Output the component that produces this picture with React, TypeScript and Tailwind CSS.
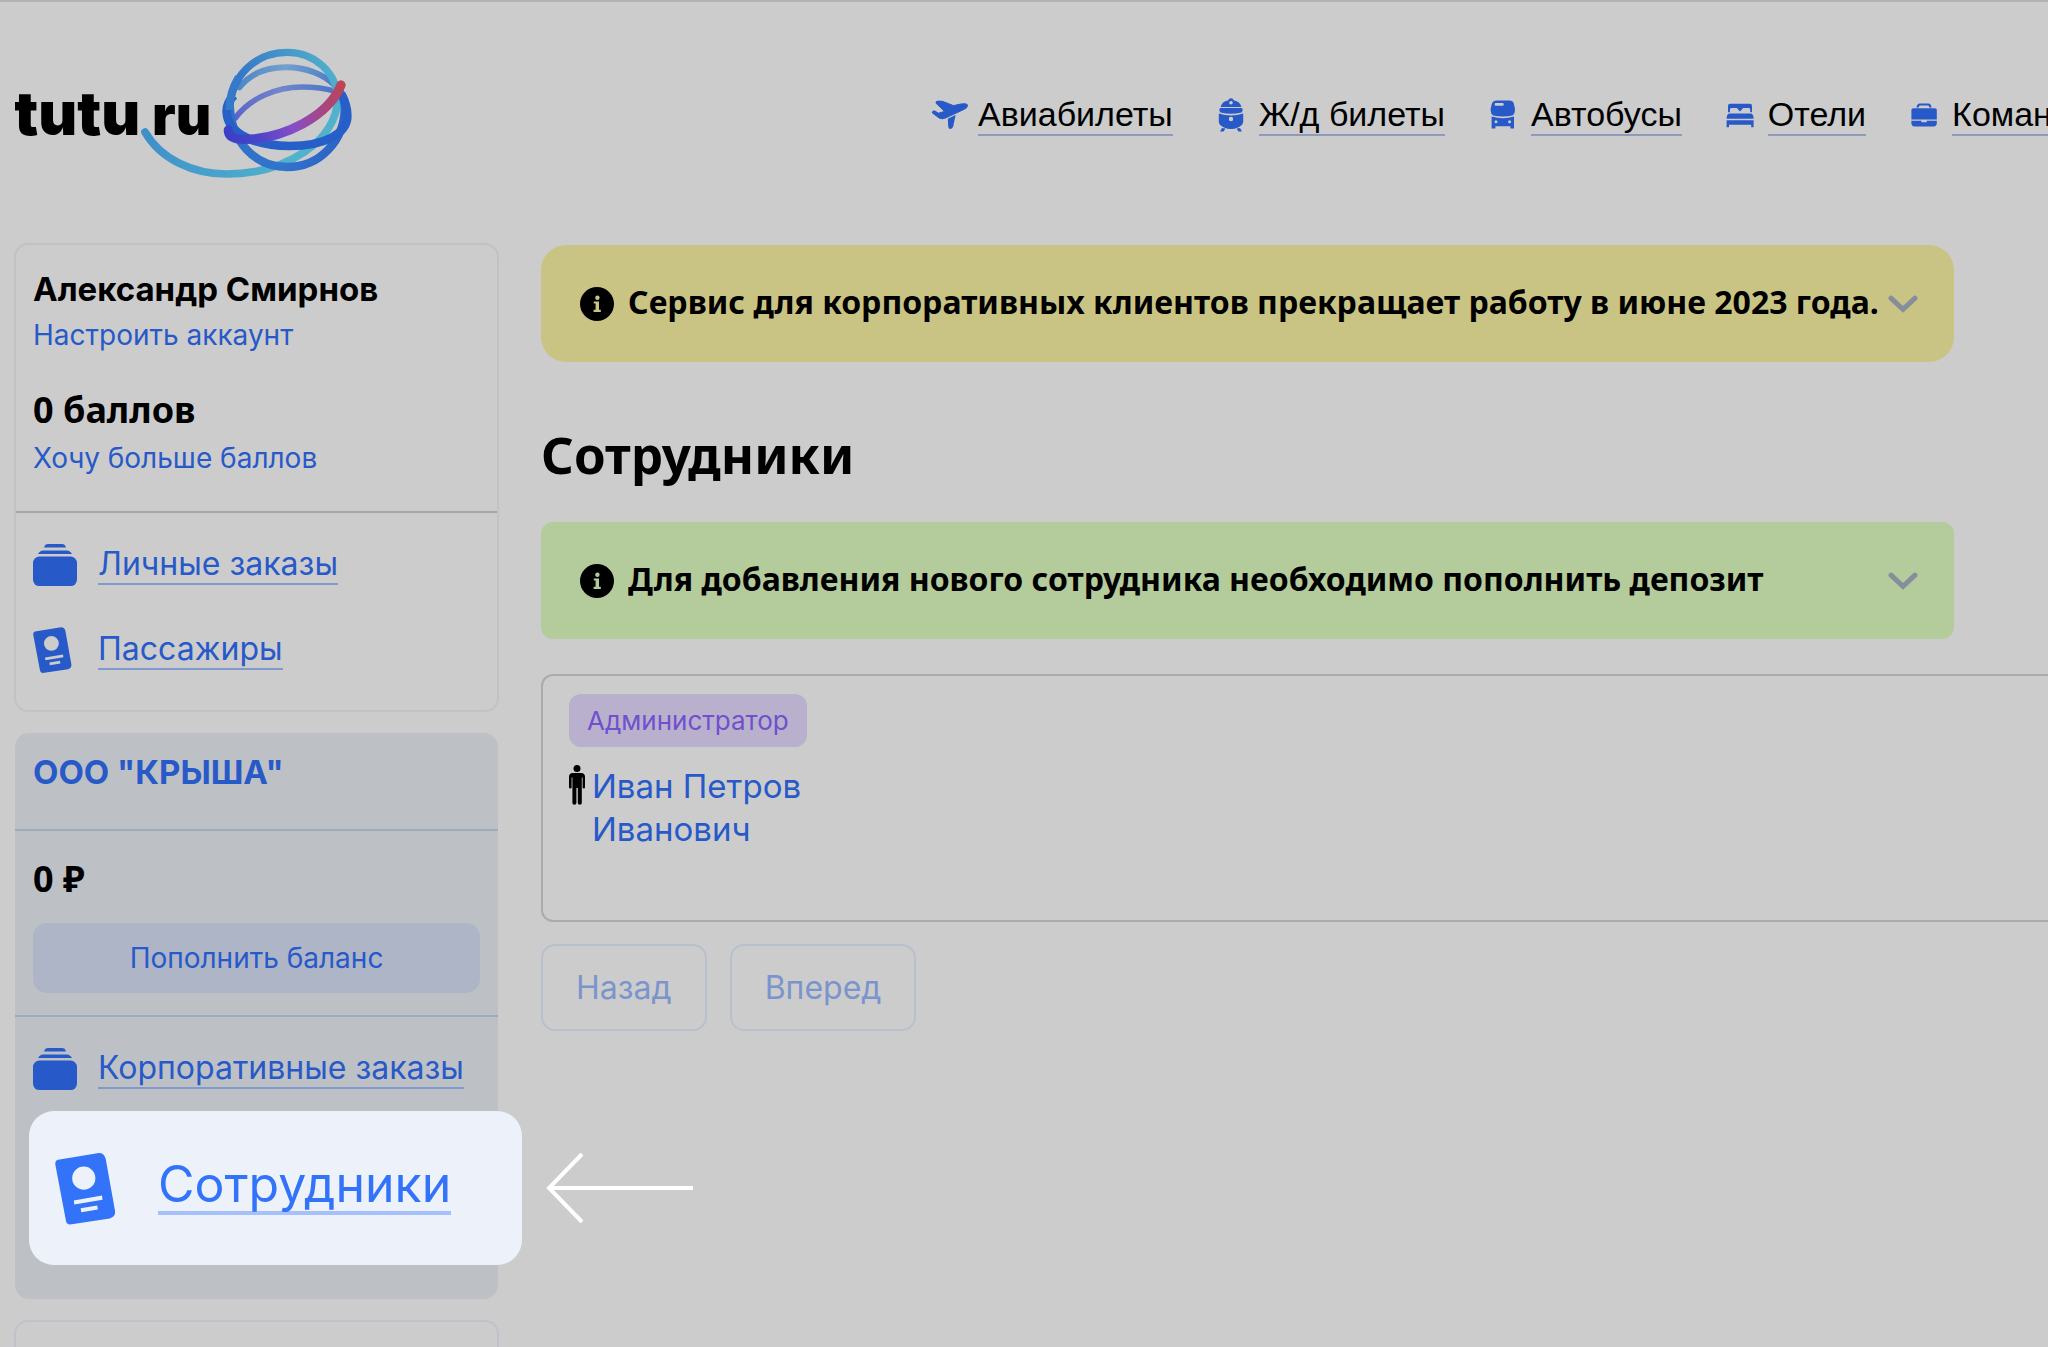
import type { ReactNode } from "react";

function Logo() {
  return (
    <svg viewBox="45 51 1011 396" className="h-[132px] w-[337px]" fill="none" strokeLinecap="round" role="img" aria-label="tutu.ru">
      <defs>
        <linearGradient id="tail" gradientUnits="userSpaceOnUse" x1="430" y1="300" x2="860" y2="400">
          <stop offset="0" stopColor="#3f8fca" />
          <stop offset="1" stopColor="#50b2cc" />
        </linearGradient>
        <linearGradient id="ring" gradientUnits="userSpaceOnUse" x1="700" y1="240" x2="1010" y2="120">
          <stop offset="0" stopColor="#2e6cc8" />
          <stop offset="0.55" stopColor="#4292ca" />
          <stop offset="1" stopColor="#50b2cc" />
        </linearGradient>
        <linearGradient id="ringLow" gradientUnits="userSpaceOnUse" x1="690" y1="240" x2="1040" y2="300">
          <stop offset="0" stopColor="#2f70c8" />
          <stop offset="0.5" stopColor="#3274cb" />
          <stop offset="1" stopColor="#2a62c8" />
        </linearGradient>
        <linearGradient id="back" gradientUnits="userSpaceOnUse" x1="710" y1="170" x2="1005" y2="170">
          <stop offset="0" stopColor="#4a86c8" />
          <stop offset="0.5" stopColor="#74a0cd" />
          <stop offset="1" stopColor="#4a7cc8" />
        </linearGradient>
        <linearGradient id="backLow" gradientUnits="userSpaceOnUse" x1="700" y1="260" x2="1005" y2="180">
          <stop offset="0" stopColor="#5a64c8" />
          <stop offset="0.5" stopColor="#7286cc" />
          <stop offset="1" stopColor="#4a76c8" />
        </linearGradient>
        <linearGradient id="swoosh" gradientUnits="userSpaceOnUse" x1="685" y1="320" x2="1025" y2="165">
          <stop offset="0" stopColor="#3a40c6" />
          <stop offset="0.2" stopColor="#4844c8" />
          <stop offset="0.5" stopColor="#864dc8" />
          <stop offset="0.8" stopColor="#a8467e" />
          <stop offset="1" stopColor="#be4458" />
        </linearGradient>
      </defs>
      <text x="43" y="314" fontFamily="Inter, sans-serif" fontWeight="900" fontSize="180" fill="#000">tutu</text>
      <text x="456" y="314" fontFamily="Inter, sans-serif" fontWeight="900" fontSize="164" fill="#000">ru</text>
      <path d="M718 172C750 132 800 112 858 112C920 112 972 134 1002 164" stroke="url(#back)" strokeWidth="18" />
      <path d="M706 264C750 204 830 171 905 171C940 171 975 175 1005 184" stroke="url(#backLow)" strokeWidth="17" />
      <path d="M435 306C482 388 580 432 680 432C860 432 1013 330 1013 205" stroke="url(#tail)" strokeWidth="23" />
      <path d="M690 240C690 140 765 67 862 67C945 67 1013 130 1013 210" stroke="url(#ring)" strokeWidth="22" />
      <path d="M690 236C696 330 760 411 862 411C960 411 1036 330 1034 230C1034 214 1030 202 1022 190" stroke="url(#ringLow)" strokeWidth="25" />
      <path d="M702 196C686 212 679 228 680 246C683 310 760 347 870 348C975 348 1042 310 1042 258C1042 232 1034 210 1024 192" stroke="#275fc8" strokeWidth="26" strokeLinecap="butt" />
      <path d="M688 240C688 205 698 172 716 142" stroke="#347ac9" strokeWidth="24" strokeLinecap="butt" />
      <path d="M685 300C685 322 705 328 735 328C850 326 985 260 1023 165" stroke="url(#swoosh)" strokeWidth="28" strokeLinejoin="round" />
    </svg>
  );
}

const PlaneIcon = () => (
  <svg viewBox="0 0 40 34" className="h-[34px] w-[40px]" fill="currentColor" aria-hidden="true">
    <path d="M6 5.2Q5.6 3.2 8 3.1L12.4 3.3L23.4 7.6L31 6Q37.6 5 37.6 7.6Q37.4 9.8 34.4 11.2L16 19.8Q12 21.8 9.2 20L2.4 15Q2 13 4.2 12.8L8.6 15.2L14.6 13.4Z" strokeWidth="1" stroke="currentColor" strokeLinejoin="round" />
    <path d="M17.8 20.8L25.6 17L23.2 28.6Q22.4 31.4 19.8 31Q18.2 30.6 18.2 28Z" />
  </svg>
);

const TrainIcon = () => (
  <svg viewBox="0 0 28 36" className="h-[36px] w-[28px]" fill="currentColor" fillRule="evenodd" aria-hidden="true">
    <path d="M3.6 10Q5 4.4 11 3.6Q12 1.2 14 1.2Q16 1.2 17 3.6Q23 4.4 24.4 10ZM14 4A1.8 1.8 0 1 0 14 7.6A1.8 1.8 0 1 0 14 4Z" />
    <path d="M3.4 11H24.6Q25.6 11 25.6 13Q25.4 15.2 24.4 15.5Q14 18 3.6 15.5Q2.6 15.2 2.4 13Q2.4 11 3.4 11Z" />
    <path d="M1.8 16.6Q14 20.6 26.2 16.6V25Q26 28.4 21 30.4Q14 33.6 7 30.4Q2 28.4 1.8 25ZM14 19.8A2.2 2.2 0 1 0 14 24.2A2.2 2.2 0 1 0 14 19.8Z" />
    <path d="M5 31L8.4 31.4L6.6 34.4H3ZM23 31L19.6 31.4L21.4 34.4H25Z" />
  </svg>
);

const BusIcon = () => (
  <svg viewBox="0 0 28 32" className="h-[32px] w-[28px]" fill="currentColor" fillRule="evenodd" aria-hidden="true">
    <path d="M8 1.4H20Q24.6 1.4 25 5.4L26 10Q26 15 23.4 16.6Q14 18.6 4.2 16.6Q1.6 15 1.6 10L2.6 5.4Q3.4 1.4 8 1.4ZM7 4A1.4 1.4 0 0 0 7 6.8H13.4A1.4 1.4 0 0 0 13.4 4Z" />
    <path d="M2.6 17.6Q14 20.8 25 17.6V29.6H21.4V27.2H6.4V29.6H2.6ZM7 21.2A1.5 1.5 0 1 0 7 24.2A1.5 1.5 0 1 0 7 21.2ZM20.6 21.2A1.5 1.5 0 1 0 20.6 24.2A1.5 1.5 0 1 0 20.6 21.2Z" />
  </svg>
);

const BedIcon = () => (
  <svg viewBox="0 0 30 27" className="h-[27px] w-[30px]" fill="currentColor" aria-hidden="true">
    <path d="M5 1.8H25Q27 1.8 27 4V10.2H25.2V7.4Q25 6 23.6 6H18.2L15 9.6L11.8 6H6.6Q5 6 5 7.4V10.2H3V4Q3 1.8 5 1.8Z" />
    <path d="M4.4 11.4H25.8Q28.6 11.8 28.6 16.8H1.6Q1.6 11.8 4.4 11.4Z" />
    <path d="M1.6 18.2H28.6V25.2H26.2V22.8H4V25.2H1.6Z" />
  </svg>
);

const CaseIcon = () => (
  <svg viewBox="0 0 28 26" className="h-[26px] w-[28px]" fill="currentColor" fillRule="evenodd" aria-hidden="true">
    <path d="M6.4 5.6Q7 1.4 10 1.4H18.4Q21 1.4 21.6 5.6H19.4Q19.2 3.6 17.8 3.6H10.4Q8.8 3.6 8.6 5.6Z" />
    <path d="M3.4 6.2H25Q26.8 6.2 26.8 8V17.6H1.4V8Q1.4 6.2 3.4 6.2Z" />
    <path d="M1.4 18.8H11.4V20.2H16.8V18.8H26.8V21.4Q26.4 24.4 23.6 24.4H4.6Q1.8 24.4 1.4 21.4Z" />
  </svg>
);

const OrdersIcon = () => (
  <svg viewBox="0 0 44 42" className="h-[42px] w-[44px]" fill="currentColor" aria-hidden="true">
    <path d="M11 3.4Q12 0 15 0H29Q32 0 33 3.4Z" />
    <path d="M5 10Q7 6.4 10 6.4H34Q37 6.4 39 10Z" />
    <rect y="12.6" width="44" height="29.4" rx="6.4" />
  </svg>
);

const PassportIcon = ({ className }: { className: string }) => (
  <svg viewBox="0 0 39 46" className={className} fill="currentColor" fillRule="evenodd" aria-hidden="true">
    <path d="M2 4.6L28 .3Q31.4 .2 32.4 4L38.4 37.4Q38.8 41 35 42.2L9.6 46Q7.4 46 7 43.6L.2 7.6Q0 5 2 4.6ZM18.4 9A7.4 7.4 0 1 0 18.4 23.8A7.4 7.4 0 1 0 18.4 9ZM12 30.6L12.4 33.2L30.4 30.2L30 27.4ZM16.4 35.6L16.8 38.2L27.4 36.4L27 33.8Z" />
  </svg>
);

const InfoIcon = () => (
  <svg viewBox="0 0 34 34" className="h-[34px] w-[34px] shrink-0" aria-hidden="true">
    <circle cx="17" cy="17" r="17" fill="#000" />
    <g className="fill-current">
      <circle cx="17.4" cy="10.8" r="2.2" />
      <path d="M13.8 14.4H19V22.8H20.8V25H13.6V22.8H15.6V16.6H13.8Z" />
    </g>
  </svg>
);

const ChevronIcon = () => (
  <svg viewBox="0 0 30 18" className="h-[18px] w-[30px] shrink-0" fill="none" stroke="#868d9c" strokeWidth="5" strokeLinecap="round" aria-hidden="true">
    <path d="M3 3.2L15 14.4L27 3.2" />
  </svg>
);

const PersonIcon = () => (
  <svg viewBox="0 0 16 40" className="h-[40px] w-[16px] shrink-0" fill="#000" aria-hidden="true">
    <circle cx="8" cy="3.6" r="3.5" />
    <path d="M4 8H12Q16 8 16 12V22.4Q16 23.4 14.8 23.4Q13.6 23.4 13.6 22.4V12.6H12.8V38Q12.8 39.8 10.8 39.8Q8.8 39.8 8.8 38V23H7.4V38Q7.4 39.8 5.4 39.8Q3.4 39.8 3.4 38V12.6H2.6V22.4Q2.6 23.4 1.4 23.4Q0 23.4 0 22.4V12Q0 8 4 8Z" />
  </svg>
);

const NAV = [
  { label: "Авиабилеты", icon: <PlaneIcon /> },
  { label: "Ж/д билеты", icon: <TrainIcon /> },
  { label: "Автобусы", icon: <BusIcon /> },
  { label: "Отели", icon: <BedIcon /> },
  { label: "Командировки", icon: <CaseIcon /> },
];

function SideLink({ icon, children }: { icon: ReactNode; children: ReactNode }) {
  return (
    <a href="#" className="flex h-[46px] items-center gap-[21px] text-[#2859c8]">
      <span className="w-[44px] shrink-0">{icon}</span>
      <span className="border-b-2 border-[#8299cd] text-[32px] leading-[38px] whitespace-nowrap">{children}</span>
    </a>
  );
}

function Notice({ className, children }: { className: string; children: ReactNode }) {
  return (
    <button type="button" className={`mr-[94px] flex h-[117px] items-center gap-[14px] pr-[36px] pl-[39px] text-left ${className}`}>
      <InfoIcon />
      <span className="min-w-0 flex-1 pb-1 font-['Noto_Sans',sans-serif] text-[32px] leading-[44px] font-bold whitespace-nowrap text-black">
        {children}
      </span>
      <ChevronIcon />
    </button>
  );
}

export default function App() {
  return (
    <div className="flex min-h-screen flex-col overflow-hidden border-t-2 border-[#b3b3b3] bg-[#cccccc] font-['Inter',sans-serif] text-black">
      <header className="flex items-start pt-[45px] pb-16 pl-[15px]">
        <a href="#" className="shrink-0">
          <Logo />
        </a>
        <nav className="ml-[578px] flex shrink-0 gap-[38px] pt-[47px] font-['Liberation_Sans',sans-serif] text-[34px] leading-[40px]">
          {NAV.map((n) => (
            <a key={n.label} href="#" className="flex items-center gap-2">
              <span className="flex w-[40px] justify-center text-[#2859c8]">{n.icon}</span>
              <span className="border-b-2 border-[#8e9bb8]">{n.label}</span>
            </a>
          ))}
        </nav>
      </header>

      <div className="flex flex-1 gap-[42px] pl-[14px]">
        <aside className="flex w-[485px] shrink-0 flex-col gap-[21px]">
          <section className="rounded-[14px] border-2 border-[#bfc3c7]">
            <div className="border-b-2 border-[#9fa8b1] px-[17px] pt-6 pb-9">
              <h2 className="text-[33px] leading-[40px] font-bold">Александр Смирнов</h2>
              <a href="#" className="mt-[9px] block text-[28px] leading-[34px] text-[#2859c8]">Настроить аккаунт</a>
              <p className="mt-[34px] font-['Noto_Sans',sans-serif] text-[36px] leading-[48px] font-bold">0 баллов</p>
              <a href="#" className="mt-[7px] block text-[28px] leading-[34px] text-[#2859c8]">Хочу больше баллов</a>
            </div>
            <div className="flex flex-col gap-[39px] px-[17px] pt-[29px] pb-[37px]">
              <SideLink icon={<OrdersIcon />}>Личные заказы</SideLink>
              <SideLink icon={<PassportIcon className="h-[46px] w-[39px]" />}>Пассажиры</SideLink>
            </div>
          </section>

          <section className="mx-px rounded-[14px] bg-[#bdc1c6] pb-[34px]">
            <h2 className="border-b-2 border-[#9fabb6] px-[18px] pt-[19px] pb-[37px] text-[33px] leading-[40px] font-bold text-[#2859c8]">
              ООО "КРЫША"
            </h2>
            <div className="border-b-2 border-[#9fabb6] px-[18px] pt-[24px] pb-[22px]">
              <p className="font-['Noto_Sans',sans-serif] text-[36px] leading-[48px] font-bold">0 ₽</p>
              <button type="button" className="mt-[20px] h-[70px] w-full rounded-[14px] bg-[#aeb5c7] text-[28px] text-[#2859c8]">
                Пополнить баланс
              </button>
            </div>
            <div className="px-[18px] pt-[29px]">
              <SideLink icon={<OrdersIcon />}>Корпоративные заказы</SideLink>
            </div>
            <a href="#" className="relative mt-[19px] -mr-[24px] ml-[14px] flex h-[154px] items-center gap-[42px] rounded-[25px] bg-[#edf2fa] pl-[26px] text-[#3273fa]">
              <PassportIcon className="h-[73px] w-[61px]" />
              <span className="mb-1 border-b-4 border-[#a6c1fa] text-[50px] leading-[54px]">Сотрудники</span>
              <svg viewBox="0 0 147 70" className="absolute left-full ml-[24px] h-[70px] w-[147px]" fill="none" stroke="#fff" strokeWidth="4" aria-hidden="true">
                <path d="M147 35H3M36 1L3 35L36 69" />
              </svg>
            </a>
          </section>

          <section className="min-h-[27px] flex-1 rounded-t-[14px] border-2 border-b-0 border-[#bfc3c9]" />
        </aside>

        <main className="flex min-w-0 flex-1 flex-col pt-[2px]">
          <Notice className="rounded-[25px] bg-[#cac484] text-[#cac484]">
            Сервис для корпоративных клиентов прекращает работу в июне 2023 года.
          </Notice>
          <h1 className="mt-[58px] font-['Noto_Sans',sans-serif] text-[51px] leading-[68px] font-bold">Сотрудники</h1>
          <Notice className="mt-[34px] rounded-xl bg-[#b4cb9b] text-[#b4cb9b]">
            Для добавления нового сотрудника необходимо пополнить депозит
          </Notice>

          <article className="mt-[35px] min-h-[248px] rounded-l-xl border-2 border-r-0 border-[#ababab] pt-[18px] pl-[26px]">
            <span className="inline-flex h-[53px] items-center rounded-xl bg-[#b8b0cc] px-[18px] text-[26px] text-[#7050cc]">
              Администратор
            </span>
            <div className="mt-[18px] flex items-start gap-[7px]">
              <PersonIcon />
              <a href="#" className="w-[240px] text-[33px] leading-[43px] text-[#2859c8]">Иван Петров Иванович</a>
            </div>
          </article>

          <div className="mt-[22px] flex gap-[23px]">
            {["Назад", "Вперед"].map((t) => (
              <button key={t} type="button" className="h-[87px] rounded-[14px] border-2 border-[#b9c0cd] px-[33px] text-[32px] text-[#7b95cc]">
                {t}
              </button>
            ))}
          </div>
        </main>
      </div>
    </div>
  );
}
